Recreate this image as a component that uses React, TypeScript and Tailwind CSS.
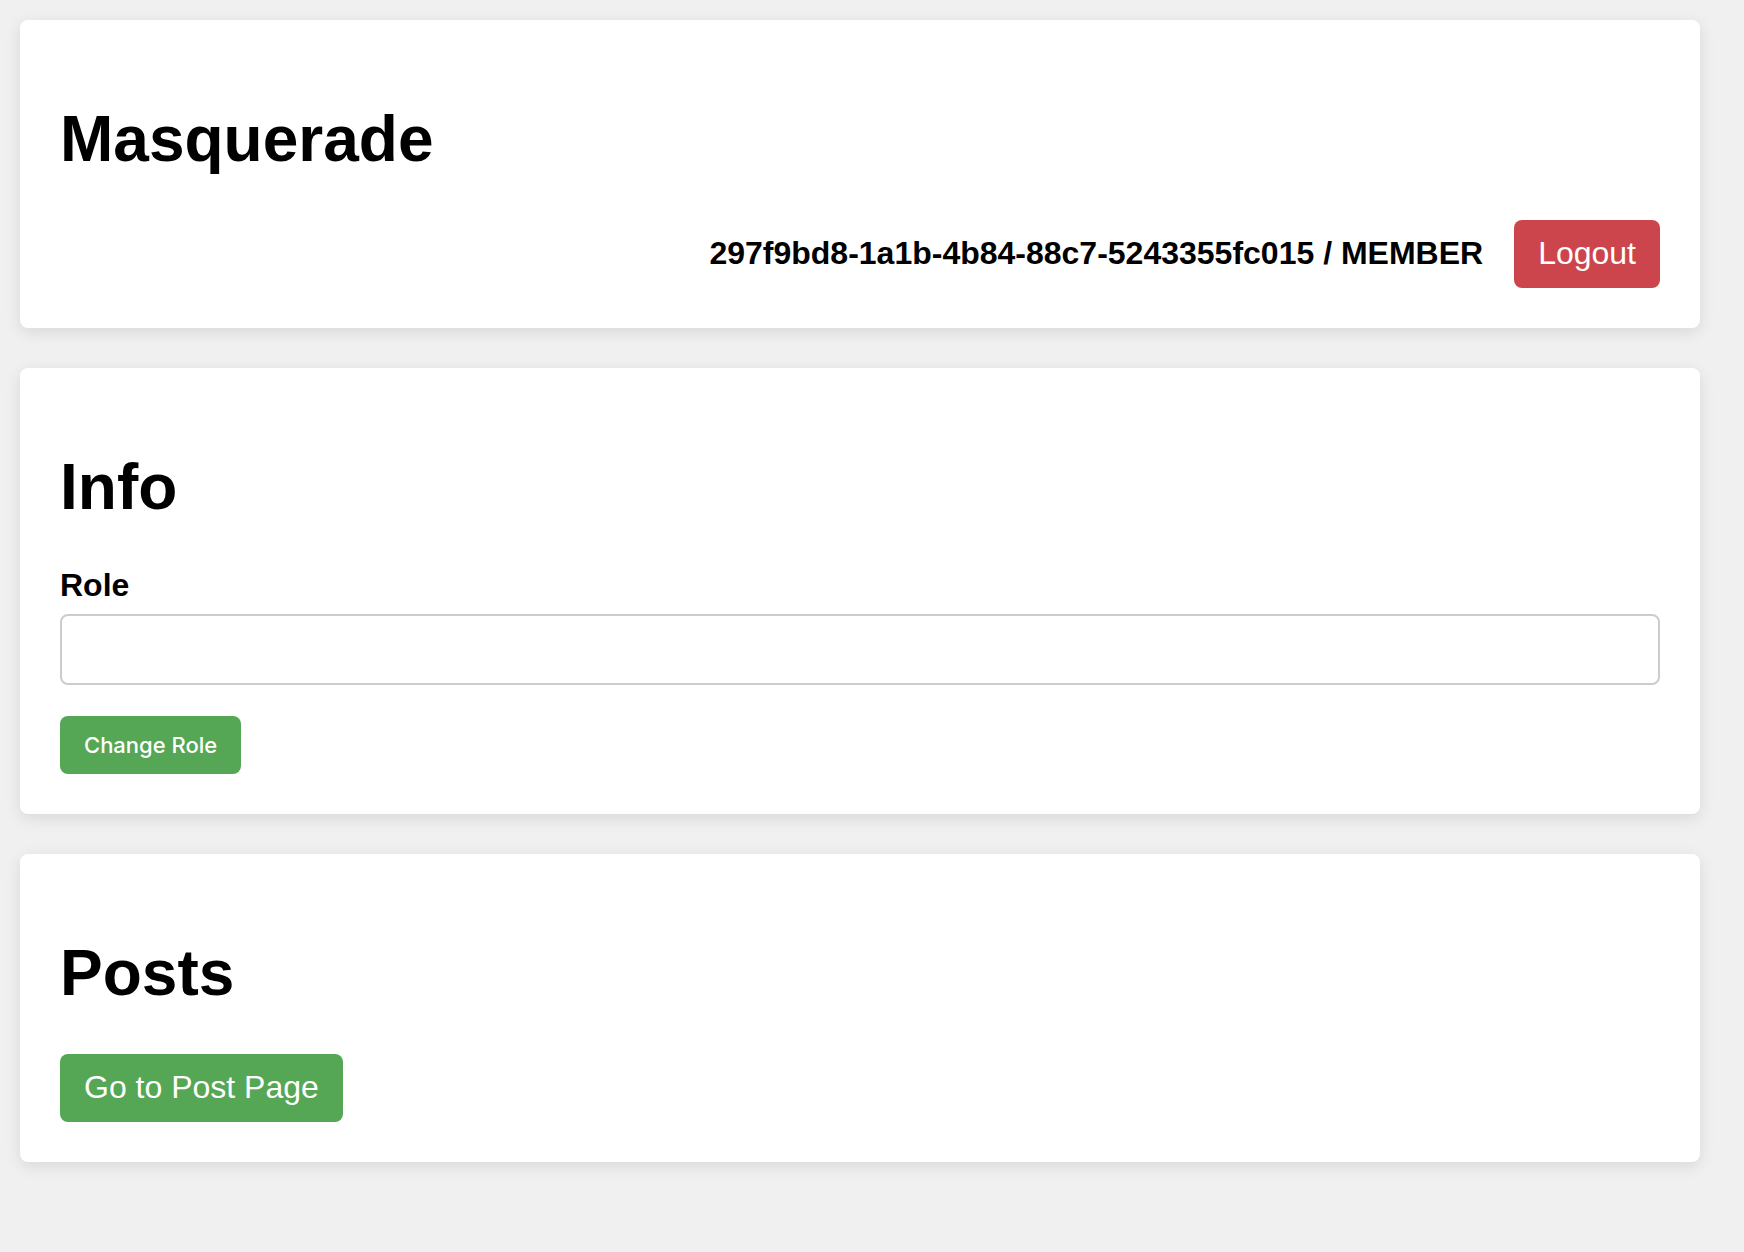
export default function App() {
  const card = "w-[1680px] bg-white rounded-[8px] shadow-[0_4px_16px_rgba(0,0,0,0.10)] p-[40px]";
  return (
    <div
      className="min-h-[1252px] bg-[#f0f0f0] p-[20px] flex flex-col gap-[40px]"
      style={{ fontFamily: '"Liberation Sans", Arial, sans-serif' }}
    >
      <div className={card}>
        <h1 className="text-[64px] leading-[73.5px] font-bold mt-[43px] mb-[43px] text-black">Masquerade</h1>
        <div className="flex justify-end items-center gap-[31px]">
          <span className="text-[32px] font-bold text-black leading-[37px]">
            297f9bd8-1a1b-4b84-88c7-5243355fc015 / MEMBER
          </span>
          <button className="h-[68px] px-[24px] rounded-[8px] bg-[#cd454c] text-white text-[32px] leading-[37px]">
            Logout
          </button>
        </div>
      </div>

      <div className={card}>
        <h1 className="text-[64px] leading-[73.5px] font-bold mt-[43px] mb-[43px] text-black">Info</h1>
        <label className="block text-[32px] font-bold leading-[37px] text-black">Role</label>
        <input
          type="text"
          className="block mt-[10px] w-full h-[71px] border-2 border-[#cccccc] rounded-[8px] bg-white outline-none px-[16px] text-[32px]"
        />
        <button
          className="mt-[31px] h-[58px] px-[24px] rounded-[8px] bg-[#55a655] text-white text-[22px] leading-[26px] font-medium"
          style={{ fontFamily: 'Inter, "Noto Sans", sans-serif' }}
        >
          Change Role
        </button>
      </div>

      <div className={card}>
        <h1 className="text-[64px] leading-[73.5px] font-bold mt-[43px] mb-[43px] text-black">Posts</h1>
        <button className="h-[68px] px-[24px] rounded-[8px] bg-[#55a655] text-white text-[32px] leading-[37px]">
          Go to Post Page
        </button>
      </div>
    </div>
  );
}
